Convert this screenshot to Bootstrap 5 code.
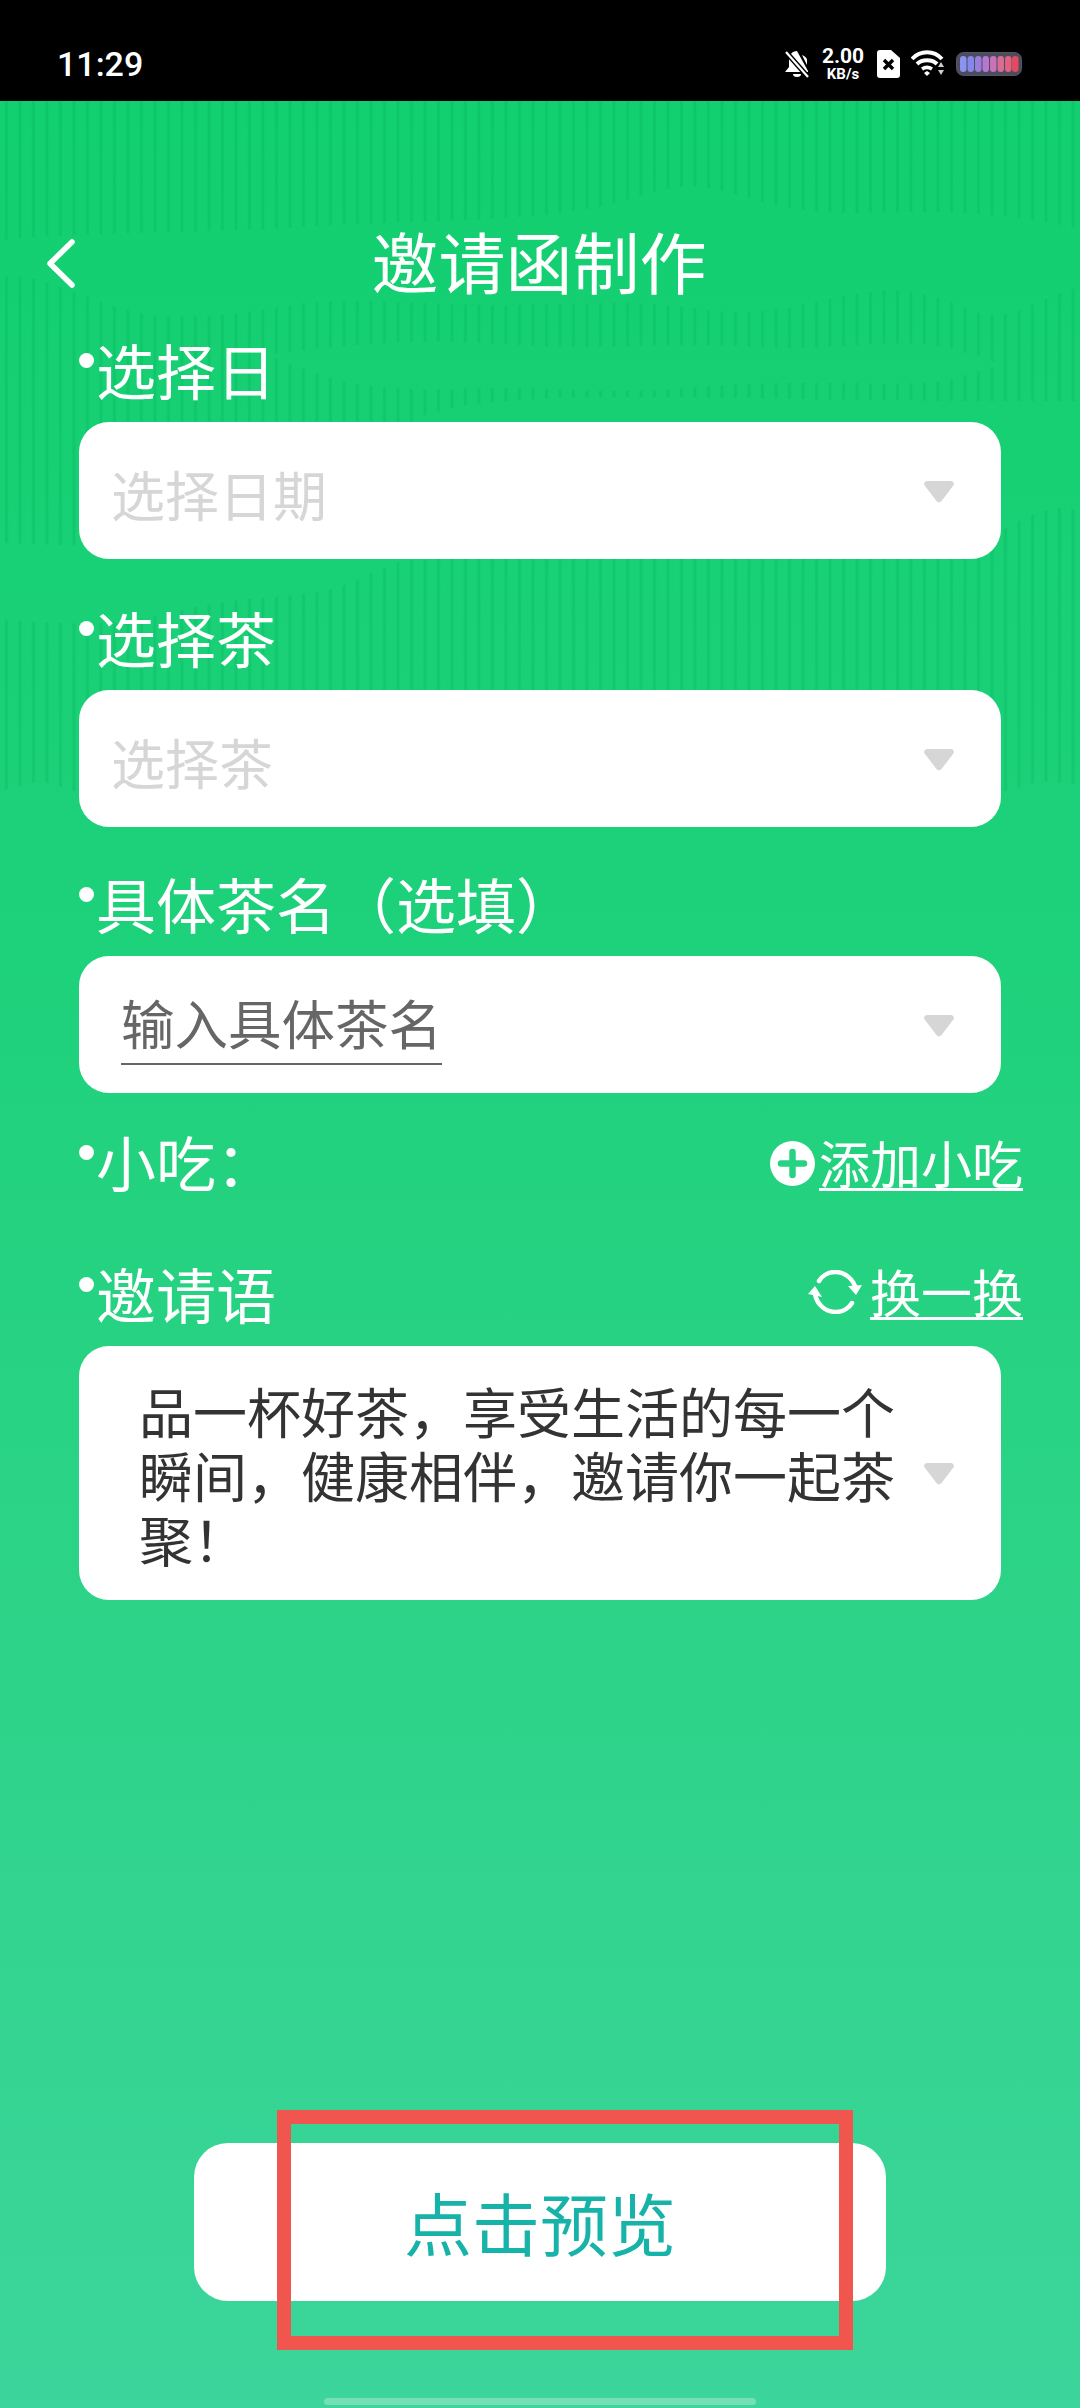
<!DOCTYPE html>
<html lang="zh-CN">
<head>
  <meta charset="UTF-8">
  <meta name="viewport" content="width=device-width, initial-scale=1.0">
  <title>邀请函制作</title>
  <link href="https://cdn.jsdelivr.net/npm/bootstrap@5.3.3/dist/css/bootstrap.min.css" rel="stylesheet">
  <style>
    html, body { margin: 0; background: #000; }
    body { font-family: "Noto Sans CJK SC", "Noto Sans", sans-serif; }
    .phone { width: 1080px; height: 2408px; overflow: hidden; }

    /* status bar */
    .status-strip { height: 101px; background: #000; color: #fff; padding: 26px 58px 0 57px; font-family: Roboto, sans-serif; flex: none; }
    .clock { font-size: 34px; font-weight: 500; line-height: 1; }
    .speed { width: 46px; line-height: 1; font-weight: 700; margin: 0 11px 0 10px; }
    .speed b { font-size: 21px; font-weight: 700; }
    .speed i { font-size: 15px; font-style: normal; }
    .stat-gap { margin-left: 11px; }

    /* green area */
    .screen { background: linear-gradient(180deg, #12cf6f 0%, #1dd17a 35%, #2ad385 60%, #3cd59b 100%); min-height: 0; }
    .stripes { position: absolute; left: 0; top: 0; width: 1080px; height: 740px; }
    .head-grid { display: grid; grid-template-columns: 1fr auto 1fr; align-items: center; height: 70px; margin-top: 127px; margin-bottom: 38px; padding-left: 46px; color: #fff; }
    .head-grid h1 { font-size: 67px; font-weight: 400; line-height: 64px; margin: 0 0 0 -48px; padding-bottom: 6px; }
    .form-wrap { padding: 0 57px 0 79px; }
    .field-label { height: 70px; color: #fff; font-size: 60px; line-height: 62px; padding-bottom: 4px; }
    .field-label .dot { display: inline-block; width: 15px; height: 15px; border-radius: 50%; background: #fff; margin: 0 2px 18px 0; flex: none; }
    .field-box { width: 922px; height: 137px; margin-top: 16px; margin-bottom: 45px; background: #fff; border-radius: 30px; padding: 0 46px 0 32px; font-size: 54px; line-height: 64px; }
    .field-box.tight { margin-bottom: 43px; }
    .holder { color: #d6d6d6; padding-top: 6px; }
    .typed { color: #666; border-bottom: 2px solid #666; margin-left: 10px; padding: 0 0 14px 0; line-height: 54px; margin-top: 11px; white-space: nowrap; font-size: 53.500px; }
    .pick { flex: none; }
    .text-area-box { height: 254px; padding-left: 60px; margin-bottom: 0; color: #333; }
    .text-area-box p { width: 760px; margin: 0; padding-top: 4px; }
    .row-link { color: #fff; font-size: 51px; line-height: 54px; }
    .row-link span { border-bottom: 3px solid #fff; line-height: 52px; display: block; }
    .snack-row { height: 110px; padding-top: 40px; margin-top: -5px; margin-bottom: 62px; }
    .snack-link { margin-top: 4px; gap: 4px; }
    .swap-link { gap: 8px; margin-bottom: 2px; }

    /* bottom */
    .preview-wrap { width: 692px; margin-top: auto; }
    .preview-btn { width: 692px; height: 158px; border: 0; border-radius: 34px; background: #fff; color: #17b3a8; font-size: 68px; line-height: 1; padding: 0; }
    .red-frame { position: absolute; left: 83px; top: -33px; width: 576px; height: 240px; border: 14px solid #f0564d; pointer-events: none; }
    .home-bar { width: 432px; height: 7px; border-radius: 4px; background: #75e0b4; margin: 97px auto 3px; flex: none; }
  </style>
</head>
<body>
  <div class="phone d-flex flex-column">
    <!-- status bar -->
    <div class="status-strip d-flex align-items-center justify-content-between">
      <div class="clock">11:29</div>
      <div class="d-flex align-items-center">
        <svg width="26" height="28" viewBox="0 0 26 28">
          <path d="M13 1c-5 0-8 4-8 9v7l-4 5h23v-1L13 1z M18 5l5 10v-5c0-2-2-4-5-5z" fill="#fff"/>
          <path d="M9 24a4 3 0 0 0 8 0z" fill="#fff"/>
          <path d="M2 2l22 25" stroke="#000" stroke-width="5"/>
          <path d="M2 2l22 25" stroke="#fff" stroke-width="2.2"/>
        </svg>
        <div class="speed d-flex flex-column align-items-center">
          <b>2.00</b><i>KB/s</i>
        </div>
        <svg width="23" height="28" viewBox="0 0 23 28">
          <path d="M3 0h11l9 8v17a3 3 0 0 1-3 3H3a3 3 0 0 1-3-3V3a3 3 0 0 1 3-3z" fill="#fff"/>
          <path d="M7 10l9 9M16 10l-9 9" stroke="#000" stroke-width="3.4"/>
        </svg>
        <svg class="stat-gap" width="34" height="27" viewBox="0 0 34 27">
          <path d="M1 9c8-9 22-9 30 0" fill="none" stroke="#fff" stroke-width="4"/>
          <path d="M6 14c5-5 15-5 20 0" fill="none" stroke="#fff" stroke-width="4"/>
          <path d="M11 19c3-2 7-2 10 0" fill="none" stroke="#fff" stroke-width="3.6"/>
          <path d="M13 23l3-2 3 2-3 3z" fill="#fff"/>
          <path d="M30 12l3 5h-6zM27 20h6l-3 5z" fill="#ccc"/>
        </svg>
        <svg class="stat-gap" width="66" height="24" viewBox="0 0 66 24">
          <rect x="0.500" y="0.500" width="65" height="23" rx="7" fill="#4c4c5c" stroke="#55556a"/>
          <rect x="4" y="4" width="6.500" height="16" rx="3.200" fill="#8a94ee"/>
          <rect x="11.500" y="4" width="6.500" height="16" rx="3.200" fill="#8488ee"/>
          <rect x="19" y="4" width="6.500" height="16" rx="3.200" fill="#9a7ddd"/>
          <rect x="26.500" y="4" width="6.500" height="16" rx="3.200" fill="#b678d2"/>
          <rect x="34" y="4" width="6.500" height="16" rx="3.200" fill="#c972b8"/>
          <rect x="41.500" y="4" width="6.500" height="16" rx="3.200" fill="#d96c96"/>
          <rect x="49" y="4" width="6.500" height="16" rx="3.200" fill="#e2627e"/>
          <rect x="56" y="4" width="6.500" height="16" rx="3.200" fill="#e44a5e"/>
        </svg>
      </div>
    </div>

    <div class="screen flex-grow-1 d-flex flex-column position-relative">
      <!-- background stripes with the wavy gaps -->
      <svg class="stripes" viewBox="0 0 1080 740">
        <defs>
          <pattern id="lines" width="13.5" height="20" patternUnits="userSpaceOnUse">
            <rect x="5" width="3" height="20" fill="#04b45c" fill-opacity=".3"/>
          </pattern>
          <mask id="waves">
            <rect width="1080" height="690" fill="#fff"/>
            <path d="M0 139C100 130 220 132 300 126S480 122 560 112S660 82 700 86S780 114 860 112S1000 110 1080 128V186C1040 196 1020 216 990 214S940 186 880 190S780 220 700 208S560 206 480 204S340 196 290 204S170 226 110 204S40 176 0 174Z" fill="#000"/>
            <path d="M270 254C360 240 440 238 520 244S680 240 760 246S900 232 960 250S1000 262 960 276S800 276 700 286S560 284 460 288S320 276 270 254Z" fill="#000"/>
            <path d="M0 442C80 444 140 452 240 420S360 380 400 330S700 300 1000 300H1080V410C1050 400 1020 420 1000 430L400 460L340 486C280 500 240 494 180 510S60 524 0 518Z" fill="#000"/>
            <path d="M0 690L40 680L80 692L1000 692L1040 680L1080 684V740H0Z" fill="#000"/>
          </mask>
        </defs>
        <rect width="1080" height="740" fill="url(#lines)" mask="url(#waves)"/>
      </svg>

      <div class="head-grid position-relative">
        <svg width="30" height="49" viewBox="0 0 30 49">
          <path d="M26 3L4 24.500L26 46" fill="none" stroke="#fff" stroke-width="5.500" stroke-linecap="round" stroke-linejoin="round"/>
        </svg>
        <h1>邀请函制作</h1>
        <div></div>
      </div>

      <div class="form-wrap position-relative">
        <div class="field-label d-flex align-items-center"><span class="dot"></span>选择日</div>
        <div class="field-box d-flex align-items-center justify-content-between">
          <div class="holder">选择日期</div>
          <svg class="pick" width="32" height="24" viewBox="0 0 32 24"><path d="M4 2h24a3 3 0 0 1 2.400 4.600L18.500 22a3 3 0 0 1-5 0L1.600 6.600A3 3 0 0 1 4 2z" fill="#d6d6d6"/></svg>
        </div>

        <div class="field-label d-flex align-items-center"><span class="dot"></span>选择茶</div>
        <div class="field-box tight d-flex align-items-center justify-content-between">
          <div class="holder">选择茶</div>
          <svg class="pick" width="32" height="24" viewBox="0 0 32 24"><path d="M4 2h24a3 3 0 0 1 2.400 4.600L18.500 22a3 3 0 0 1-5 0L1.600 6.600A3 3 0 0 1 4 2z" fill="#d6d6d6"/></svg>
        </div>

        <div class="field-label d-flex align-items-center"><span class="dot"></span>具体茶名&#xFF08;选填&#xFF09;</div>
        <div class="field-box d-flex align-items-center justify-content-between mb-0">
          <div class="typed">输入具体茶名</div>
          <svg class="pick" width="32" height="24" viewBox="0 0 32 24"><path d="M4 2h24a3 3 0 0 1 2.400 4.600L18.500 22a3 3 0 0 1-5 0L1.600 6.600A3 3 0 0 1 4 2z" fill="#d6d6d6"/></svg>
        </div>

        <div class="field-label d-flex align-items-center justify-content-between snack-row">
          <div class="d-flex align-items-center"><span class="dot"></span>小吃&#xFF1A;</div>
          <div class="row-link snack-link d-flex align-items-center">
            <svg width="45" height="45" viewBox="0 0 45 45">
              <circle cx="22.500" cy="22.500" r="22.500" fill="#fff"/>
              <path d="M22.500 11v23M11 22.500h23" stroke="#27d283" stroke-width="6.500" stroke-linecap="round"/>
            </svg>
            <span>添加小吃</span>
          </div>
        </div>

        <div class="field-label d-flex align-items-center justify-content-between">
          <div class="d-flex align-items-center"><span class="dot"></span>邀请语</div>
          <div class="row-link swap-link d-flex align-items-center">
            <svg width="54" height="44" viewBox="0 0 54 44">
              <path d="M48 20C46 9 37 2 27 2C20 2 14 6 11 11" fill="none" stroke="#fff" stroke-width="4.500" stroke-linecap="round"/>
              <path d="M40 16L48 25L54 15Z" fill="#fff"/>
              <path d="M7 24C9 35 18 42 28 42C35 42 41 38 44 33" fill="none" stroke="#fff" stroke-width="4.500" stroke-linecap="round"/>
              <path d="M0 24L7 16L14 27Z" fill="#fff"/>
            </svg>
            <span>换一换</span>
          </div>
        </div>
        <div class="field-box text-area-box d-flex align-items-center justify-content-between">
          <p>品一杯好茶&#xFF0C;享受生活的每一个瞬间&#xFF0C;健康相伴&#xFF0C;邀请你一起茶聚&#xFF01;</p>
          <svg class="pick" width="32" height="24" viewBox="0 0 32 24"><path d="M4 2h24a3 3 0 0 1 2.400 4.600L18.500 22a3 3 0 0 1-5 0L1.600 6.600A3 3 0 0 1 4 2z" fill="#d6d6d6"/></svg>
        </div>
      </div>

      <div class="preview-wrap mx-auto position-relative">
        <button type="button" class="btn preview-btn d-block">点击预览</button>
        <div class="red-frame"></div>
      </div>
      <div class="home-bar"></div>
    </div>
  </div>
  <script src="https://cdn.jsdelivr.net/npm/bootstrap@5.3.3/dist/js/bootstrap.bundle.min.js"></script>
</body>
</html>
